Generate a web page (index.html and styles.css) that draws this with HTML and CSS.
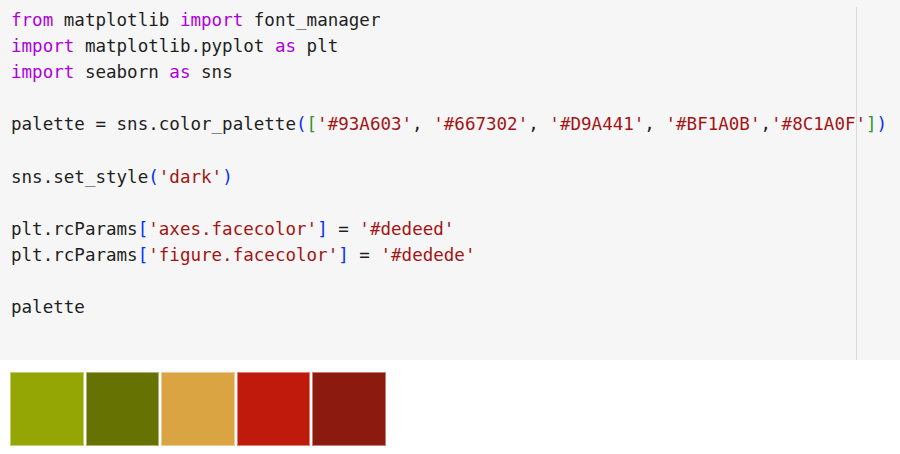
FILE: index.html
```html
<!DOCTYPE html>
<html>
<head>
<meta charset="utf-8">
<link rel="stylesheet" href="styles.css">
</head>
<body>
<div class="cell">
  <div class="editor">
<pre class="code"><span class="kw">from</span> matplotlib <span class="kw">import</span> font_manager
<span class="kw">import</span> matplotlib.pyplot <span class="kw">as</span> plt
<span class="kw">import</span> seaborn <span class="kw">as</span> sns

palette = sns.color_palette<span class="b1">(</span><span class="b2">[</span><span class="str">'#93A603'</span>, <span class="str">'#667302'</span>, <span class="str">'#D9A441'</span>, <span class="str">'#BF1A0B'</span>,<span class="str">'#8C1A0F'</span><span class="b2">]</span><span class="b1">)</span>

sns.set_style<span class="b1">(</span><span class="str">'dark'</span><span class="b1">)</span>

plt.rcParams<span class="b1">[</span><span class="str">'axes.facecolor'</span><span class="b1">]</span> = <span class="str">'#dedeed'</span>
plt.rcParams<span class="b1">[</span><span class="str">'figure.facecolor'</span><span class="b1">]</span> = <span class="str">'#dedede'</span>

palette</pre>
  </div>
</div>
<div class="output">
  <div class="swatch c1"></div>
  <div class="swatch c2"></div>
  <div class="swatch c3"></div>
  <div class="swatch c4"></div>
  <div class="swatch c5"></div>
</div>
</body>
</html>
```

FILE: styles.css
```css
html, body {
  margin: 0;
  padding: 0;
  background: #ffffff;
}

.cell {
  background: #f6f6f6;
  height: 360px;
  display: flex;
  padding-top: 7px;
  box-sizing: border-box;
}

.editor {
  width: 857px;
  flex: none;
  border-right: 1px solid #dadada;
  box-sizing: border-box;
  overflow: visible;
}

.code {
  margin: 0;
  padding-left: 11px;
  font-family: "DejaVu Sans Mono", monospace;
  font-size: 17.55px;
  line-height: 26.1px;
  color: #1f1f1f;
  white-space: pre;
}

.kw { color: #af00db; }
.str { color: #a31515; }
.b1 { color: #0431fa; }
.b2 { color: #319331; }

.output {
  display: flex;
  gap: 2px;
  padding: 12px 0 0 10px;
}

.swatch {
  width: 73.5px;
  height: 73.5px;
  box-sizing: border-box;
  border: 1px solid rgba(255, 255, 255, 0.45);
}

.c1 { background: #93a603; }
.c2 { background: #667302; }
.c3 { background: #d9a441; }
.c4 { background: #bf1a0b; }
.c5 { background: #8c1a0f; }
```
